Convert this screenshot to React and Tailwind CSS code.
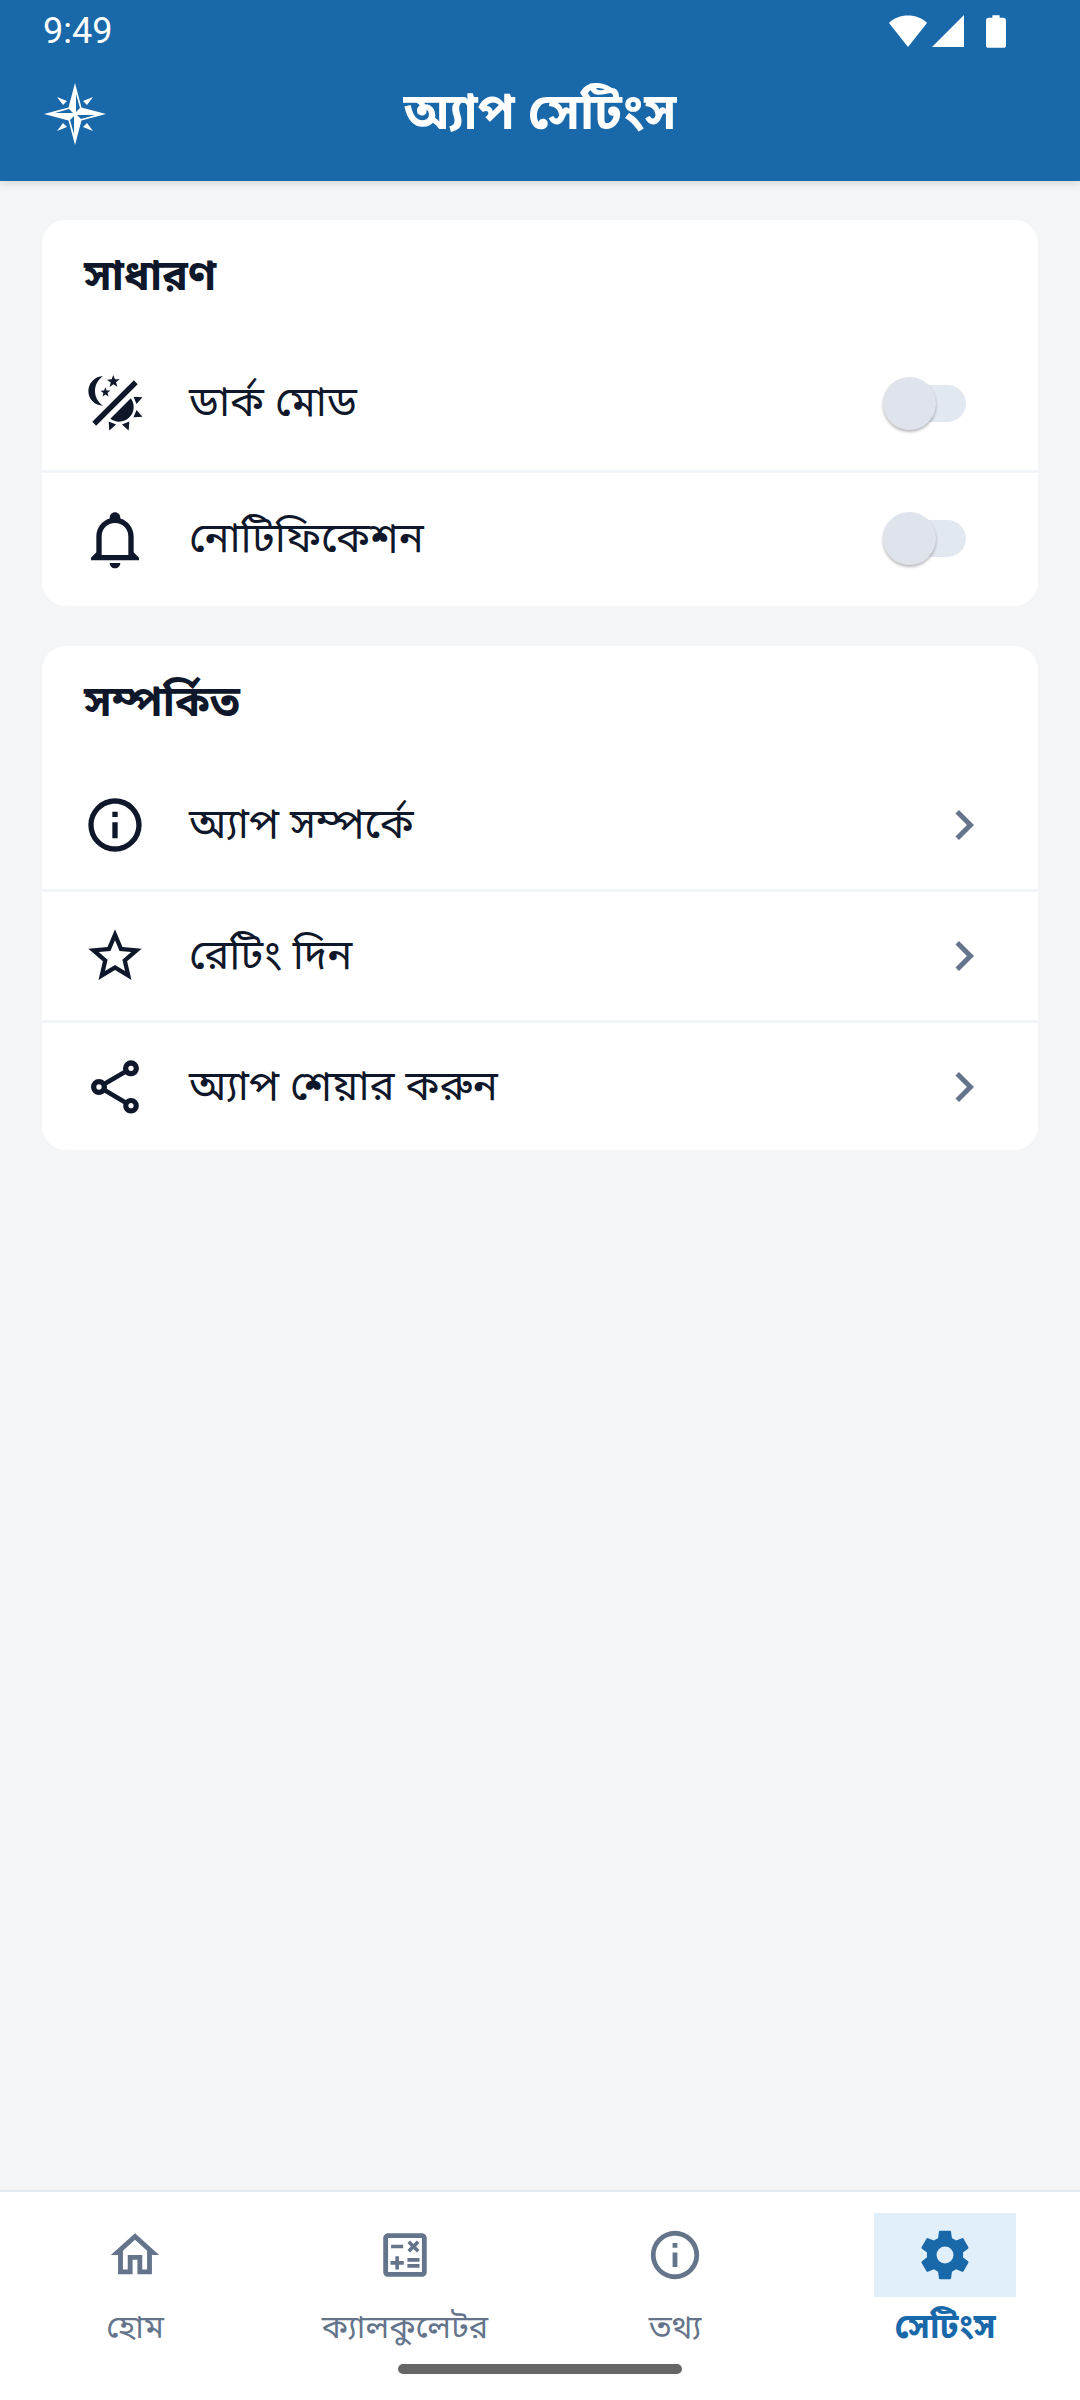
import React from "react";

const INK = "#0f172a";

// material design icon paths
const paths = {
  dark: "M7.5,2C5.71,3.15 4.5,5.18 4.5,7.5C4.5,9.82 5.71,11.85 7.53,13C4.46,13 2,10.54 2,7.5A5.5,5.5 0 0,1 7.5,2M19.07,3.5L20.5,4.93L4.93,20.5L3.5,19.07L19.07,3.5M12.89,5.93L11.41,5L9.97,6L10.39,4.3L9,3.24L10.75,3.12L11.33,1.47L12,3.1L13.73,3.13L12.38,4.26L12.89,5.93M9.59,9.54L8.43,8.81L7.31,9.59L7.65,8.27L6.56,7.44L7.92,7.35L8.37,6.06L8.88,7.33L10.24,7.35L9.19,8.23L9.59,9.54M19,13.5A5.5,5.5 0 0,1 13.5,19C12.28,19 11.15,18.6 10.24,17.93L17.93,10.24C18.6,11.15 19,12.28 19,13.5M14.6,20.08L17.37,18.93L17.13,22.28L14.6,20.08M18.93,17.38L20.08,14.6L22.28,17.13L18.93,17.38M20.08,12.42L18.94,9.64L22.28,9.88L20.08,12.42M9.63,18.93L12.41,20.08L9.87,22.27L9.63,18.93Z",
  bell: "M10 21H14C14 22.1 13.1 23 12 23S10 22.1 10 21M21 19V20H3V19L5 17V11C5 7.9 7 5.2 10 4.3V4C10 2.9 10.9 2 12 2S14 2.9 14 4V4.3C17 5.2 19 7.9 19 11V17L21 19M17 11C17 8.2 14.8 6 12 6S7 8.2 7 11V18H17V11Z",
  info: "M11,9H13V7H11M12,20C7.59,20 4,16.41 4,12C4,7.59 7.59,4 12,4C16.41,4 20,7.59 20,12C20,16.41 16.41,20 12,20M12,2A10,10 0 0,0 2,12A10,10 0 0,0 12,22A10,10 0 0,0 22,12A10,10 0 0,0 12,2M11,17H13V11H11V17Z",
  star: "M12,15.39L8.24,17.66L9.23,13.38L5.91,10.5L10.29,10.13L12,6.09L13.71,10.13L18.09,10.5L14.77,13.38L15.76,17.66M22,9.24L14.81,8.63L12,2L9.19,8.63L2,9.24L7.45,13.97L5.82,21L12,17.27L18.18,21L16.54,13.97L22,9.24Z",
  share: "M18,16.08C17.24,16.08 16.56,16.38 16.04,16.85L8.91,12.7C8.96,12.47 9,12.24 9,12C9,11.76 8.96,11.53 8.91,11.3L15.96,7.19C16.5,7.69 17.21,8 18,8A3,3 0 0,0 21,5A3,3 0 0,0 18,2A3,3 0 0,0 15,5C15,5.24 15.04,5.47 15.09,5.7L8.04,9.81C7.5,9.31 6.79,9 6,9A3,3 0 0,0 3,12A3,3 0 0,0 6,15C6.79,15 7.5,14.69 8.04,14.19L15.16,18.34C15.11,18.55 15.08,18.77 15.08,19C15.08,20.61 16.39,21.91 18,21.91C19.61,21.91 20.92,20.61 20.92,19A2.92,2.92 0 0,0 18,16.08M18,4A1,1 0 0,1 19,5A1,1 0 0,1 18,6A1,1 0 0,1 17,5A1,1 0 0,1 18,4M6,13A1,1 0 0,1 5,12A1,1 0 0,1 6,11A1,1 0 0,1 7,12A1,1 0 0,1 6,13M18,20C17.45,20 17,19.55 17,19C17,18.45 17.45,18 18,18C18.55,18 19,18.45 19,19C19,19.55 18.55,20 18,20Z",
  home: "M12 5.69L17 10.19V18H15V12H9V18H7V10.19L12 5.69M12 3L2 12H5V20H11V14H13V20H19V12H22L12 3Z",
  calc: "M19 3H5C3.9 3 3 3.9 3 5V19C3 20.1 3.9 21 5 21H19C20.1 21 21 20.1 21 19V5C21 3.9 20.1 3 19 3M19 19H5V5H19V19M6.25 7.72H11.25V9.22H6.25V7.72M13 15.75H18V17.25H13V15.75M13 13.25H18V14.75H13V13.25M8 18H9.5V16H11.5V14.5H9.5V12.5H8V14.5H6V16H8V18M14.09 10.95L15.5 9.54L16.91 10.95L18 9.89L16.59 8.47L18 7.06L16.91 6L15.5 7.41L14.09 6L13 7.06L14.41 8.47L13 9.89L14.09 10.95Z",
  cog: "M12,15.5A3.5,3.5 0 0,1 8.5,12A3.5,3.5 0 0,1 12,8.5A3.5,3.5 0 0,1 15.5,12A3.5,3.5 0 0,1 12,15.5M19.43,12.97C19.47,12.65 19.5,12.33 19.5,12C19.5,11.67 19.47,11.34 19.43,11L21.54,9.37C21.73,9.22 21.78,8.95 21.66,8.73L19.66,5.27C19.54,5.05 19.27,4.96 19.05,5.05L16.56,6.05C16.04,5.66 15.5,5.32 14.87,5.07L14.5,2.42C14.46,2.18 14.25,2 14,2H10C9.75,2 9.54,2.18 9.5,2.42L9.13,5.07C8.5,5.32 7.96,5.66 7.44,6.05L4.95,5.05C4.73,4.96 4.46,5.05 4.34,5.27L2.34,8.73C2.21,8.95 2.27,9.22 2.46,9.37L4.57,11C4.53,11.34 4.5,11.67 4.5,12C4.5,12.33 4.53,12.65 4.57,12.97L2.46,14.63C2.27,14.78 2.21,15.05 2.34,15.27L4.34,18.73C4.46,18.95 4.73,19.03 4.95,18.95L7.44,17.94C7.96,18.34 8.5,18.68 9.13,18.93L9.5,21.58C9.54,21.82 9.75,22 10,22H14C14.25,22 14.46,21.82 14.5,21.58L14.87,18.93C15.5,18.67 16.04,18.34 16.56,17.94L19.05,18.95C19.27,19.03 19.54,18.95 19.66,18.73L21.66,15.27C21.78,15.05 21.73,14.78 21.54,14.63L19.43,12.97Z",
};

const Icon = ({ name, size, color }) => (
  <svg width={size} height={size} viewBox="0 0 24 24" fill={color}>
    <path d={paths[name]} />
  </svg>
);

const Chevron = () => (
  <svg className="mr-[2px]" width="60" height="60" viewBox="0 0 24 24" fill="#64748b">
    <path d="M8.59,16.58L13.17,12L8.59,7.41L10,6L16,12L10,18L8.59,16.58Z" />
  </svg>
);

const Toggle = () => (
  <div className="relative mr-[30px] w-[83px] h-[53px] flex items-center justify-end">
    <div className="w-[70px] h-[37px] rounded-full bg-[#e2e8f0]" />
    <div className="absolute left-0 top-0 w-[53px] h-[53px] rounded-full bg-[#dfe4ec] shadow-[0_2px_3px_rgba(0,0,0,0.28)]" />
  </div>
);

const Compass = () => (
  <svg width="64" height="64" viewBox="0 0 64 64" fill="white">
    <path
      fillRule="evenodd"
      d="M32 1L38.5 25.5L63 32L38.5 38.5L32 63L25.5 38.5L1 32L25.5 25.5ZM33 12L37 26L33 30ZM52 33L38 37L34 33ZM31 52L27 38L31 34ZM12 31L26 27L30 31Z"
    />
    <path d="M14 15L24 19L20 23ZM50 15L40 19L44 23ZM14 49L24 45L20 41ZM50 49L40 45L44 41Z" />
  </svg>
);

const Row = ({ icon, label, right, last, h }) => (
  <div className={`flex items-center pl-[40px] pr-[42px] ${h} ${last ? "" : "border-b-[3px] border-[#f1f5f9]"}`}>
    <div className="w-[66px] flex justify-center shrink-0">
      <Icon name={icon} size={64} color={INK} />
    </div>
    <div className="ml-[41px] flex-1 pt-[4px] text-[42px] leading-[58px] text-[#0f172a]">{label}</div>
    {right}
  </div>
);

const Card = ({ title, head, children }) => (
  <section className="bg-white rounded-[24px] overflow-hidden">
    <h2 className={`${head} pl-[42px] pt-[31px] text-[43px] leading-[58px] font-bold text-[#0f172a]`}>{title}</h2>
    {children}
  </section>
);

const NavItem = ({ icon, label, active }) => (
  <div className="w-[270px] flex flex-col items-center">
    <div className={`w-[142px] h-[84px] flex items-center justify-center ${active ? "bg-[#e1effb]" : ""}`}>
      <Icon name={icon} size={58} color={active ? "#1868aa" : "#64748b"} />
    </div>
    <div className={`mt-[10px] leading-[46px] ${active ? "text-[34px] font-bold text-[#1868aa]" : "text-[32.5px] text-[#64748b]"}`}>
      {label}
    </div>
  </div>
);

export default function App() {
  return (
    <div
      className="w-[1080px] h-[2400px] flex flex-col bg-[#f4f5f7]"
      style={{ fontFamily: '"Noto Sans Bengali", "Noto Sans", "Lohit Bengali", sans-serif' }}
    >
      <header className="relative h-[181px] bg-[#1868aa] shadow-[0_2px_8px_rgba(0,0,0,0.15)] shrink-0">
        <div className="h-[60px] pl-[43px] pr-[74px] flex items-center justify-between text-white">
          <span className="pt-[2px] text-[36px] font-['Roboto']">9:49</span>
          <div className="flex items-center gap-[4px] pt-[2px] pl-[2px]">
            <svg width="40" height="34" viewBox="0 0 40 34" fill="white">
              <path d="M20 33L1 9C10 -1 30 -1 39 9Z" />
            </svg>
            <svg width="32" height="34" viewBox="0 0 32 34" fill="white">
              <path d="M32 1V33H0Z" />
            </svg>
            <svg className="ml-[18px]" width="20" height="35" viewBox="0 0 22 36" fill="white">
              <path d="M7 0H15V3H19A3 3 0 0 1 22 6V33A3 3 0 0 1 19 36H3A3 3 0 0 1 0 33V6A3 3 0 0 1 3 3H7Z" />
            </svg>
          </div>
        </div>
        <div className="relative h-[104px] flex items-center justify-center">
          <div className="absolute left-[43px] top-[22px]">
            <Compass />
          </div>
          <h1 className="text-[50px] leading-[68px] pt-[8px] font-bold text-white">অ্যাপ সেটিংস</h1>
        </div>
      </header>

      <main className="flex-1 flex flex-col gap-[40px] px-[42px] pt-[39px]">
        <Card title="সাধারণ" head="h-[116px]">
          <Row h="h-[137px]" icon="dark" label="ডার্ক মোড" right={<Toggle />} />
          <Row h="h-[133px] pb-[2px]" icon="bell" label="নোটিফিকেশন" right={<Toggle />} last />
        </Card>
        <Card title="সম্পর্কিত" head="h-[114px]">
          <Row h="h-[132px]" icon="info" label="অ্যাপ সম্পর্কে" right={<Chevron />} />
          <Row h="h-[131px]" icon="star" label="রেটিং দিন" right={<Chevron />} />
          <Row h="h-[127px]" icon="share" label="অ্যাপ শেয়ার করুন" right={<Chevron />} last />
        </Card>
      </main>

      <nav className="relative h-[210px] shrink-0 bg-white border-t-[2px] border-[#e2e8f0] flex pt-[21px]">
        <NavItem icon="home" label="হোম" />
        <NavItem icon="calc" label="ক্যালকুলেটর" />
        <NavItem icon="info" label="তথ্য" />
        <NavItem icon="cog" label="সেটিংস" active />
        <div className="absolute left-[398px] top-[172px] w-[284px] h-[10px] rounded-full bg-[#666666]" />
      </nav>
    </div>
  );
}
